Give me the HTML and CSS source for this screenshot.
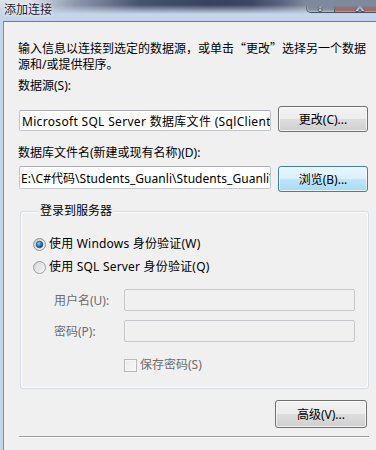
FILE: index.html
```html
<!DOCTYPE html>
<html lang="zh-CN">
<head>
<meta charset="utf-8">
<title>添加连接</title>
<link rel="stylesheet" href="styles.css">
</head>
<body>
<div class="window">
  <div class="titlebar">
    <div class="glass-band"></div>
    <div class="titlebar-row">
      <span class="title">添加连接</span>
      <div class="caption-buttons">
        <span class="cap-btn help">?</span>
        <span class="cap-btn close">X</span>
      </div>
    </div>
  </div>
  <div class="client">
    <p class="intro">输入信息以连接到选定的数据源，或单击<span class="cjk">“</span>更改<span class="cjk">”</span>选择另一个数据源和/或提供程序。</p>
    <div class="label">数据源(S):</div>
    <div class="row row-source">
      <div class="field field-source">Microsoft SQL Server 数据库文件 (SqlClient)</div>
      <button class="btn">更改(C)...</button>
    </div>
    <div class="label label-file">数据库文件名(新建或现有名称)(D):</div>
    <div class="row row-file">
      <div class="field field-file">E:\C#代码\Students_Guanli\Students_Guanli\App_Data\Students.mdf</div>
      <button class="btn btn-default">浏览(B)...</button>
    </div>
    <fieldset class="group">
      <legend class="group-title">登录到服务器</legend>
      <label class="radio-row">
        <svg class="radio" width="13" height="13" viewBox="0 0 13 13">
          <defs>
            <linearGradient id="rg1" x1="0" y1="0" x2="1" y2="1">
              <stop offset="0" stop-color="#c8c8c8"/>
              <stop offset="1" stop-color="#f6f6f6"/>
            </linearGradient>
            <radialGradient id="dot" cx="0.4" cy="0.35" r="0.7">
              <stop offset="0" stop-color="#9fd3f6"/>
              <stop offset="0.45" stop-color="#3a86c6"/>
              <stop offset="1" stop-color="#10365e"/>
            </radialGradient>
          </defs>
          <circle cx="6.5" cy="6.5" r="6" fill="url(#rg1)" stroke="#8d9197"/>
          <circle cx="6.5" cy="6.5" r="3.3" fill="url(#dot)" stroke="#1b3e66" stroke-width="0.6"/>
        </svg>
        <span>使用 Windows 身份验证(W)</span>
      </label>
      <label class="radio-row">
        <svg class="radio" width="13" height="13" viewBox="0 0 13 13">
          <defs>
            <linearGradient id="rg2" x1="0" y1="0" x2="1" y2="1">
              <stop offset="0" stop-color="#cfcfcf"/>
              <stop offset="1" stop-color="#fafafa"/>
            </linearGradient>
          </defs>
          <circle cx="6.5" cy="6.5" r="6" fill="url(#rg2)" stroke="#9a9ea3"/>
          <circle cx="6.5" cy="6.5" r="3.5" fill="#e6e6e6"/>
        </svg>
        <span>使用 SQL Server 身份验证(Q)</span>
      </label>
      <div class="cred-row cred-user">
        <span class="cred-label">用户名(U):</span>
        <div class="field field-disabled"></div>
      </div>
      <div class="cred-row cred-pass">
        <span class="cred-label">密码(P):</span>
        <div class="field field-disabled"></div>
      </div>
      <label class="check-row">
        <span class="checkbox"></span>
        <span>保存密码(S)</span>
      </label>
    </fieldset>
    <div class="adv-row">
      <button class="btn btn-adv">高级(V)...</button>
    </div>
    <div class="separator"></div>
    <div class="footer">
      <button class="btn btn-test">测试连接(T)</button>
      <button class="btn btn-default btn-ok">确定</button>
      <button class="btn btn-cancel">取消</button>
    </div>
  </div>
</div>
</body>
</html>
```

FILE: styles.css
```css
* {
  box-sizing: border-box;
}

html, body {
  margin: 0;
  padding: 0;
}

body {
  width: 376px;
  height: 450px;
  overflow: hidden;
  font-family: "Noto Sans", "Open Sans", "Noto Sans CJK SC", sans-serif;
  font-size: 12px;
  color: #000;
  background: #c4d5eb;
}

.cjk {
  font-family: "Noto Sans CJK SC", sans-serif;
}

.window {
  width: 376px;
  height: 450px;
  display: flex;
  flex-direction: column;
  overflow: hidden;
}

.titlebar {
  height: 21px;
  flex: none;
  display: grid;
  grid-template: 21px / 376px;
  background: linear-gradient(180deg, #dde3ea 0px, #ccd7e6 10px, #c4d5ec 15px, #c2d3eb 21px);
}

.glass-band,
.titlebar-row {
  grid-area: 1 / 1;
}

.glass-band {
  height: 21px;
  background: linear-gradient(90deg, rgba(60, 72, 100, 0) 30px, rgba(80, 94, 122, 0.55) 75px, #46536f 140px, #36425f 210px, #3a4663 250px, #5a6680 282px, #7f899c 306px);
  -webkit-mask-image: linear-gradient(180deg, #000 0px, #000 5px, rgba(0, 0, 0, 0.45) 10px, rgba(0, 0, 0, 0) 14px);
  mask-image: linear-gradient(180deg, #000 0px, #000 5px, rgba(0, 0, 0, 0.45) 10px, rgba(0, 0, 0, 0) 14px);
}

.titlebar-row {
  display: flex;
  align-items: flex-start;
}

.title {
  margin: 2px 0 0 4px;
  line-height: 14px;
  font-family: "Noto Sans CJK SC", sans-serif;
  font-size: 12px;
  color: #1c2030;
  text-shadow: 0 0 6px rgba(255, 255, 255, 0.9), 0 0 3px rgba(255, 255, 255, 0.9);
}

.caption-buttons {
  margin-left: auto;
  display: flex;
  height: 13px;
  margin-right: -10px;
}

.cap-btn {
  display: flex;
  justify-content: center;
  align-items: flex-end;
  height: 13px;
  overflow: hidden;
  color: #fff;
  font-family: "DejaVu Sans", sans-serif;
  font-weight: bold;
  font-size: 12px;
  line-height: 10px;
  text-shadow: 0 0 1px #222, 1px 0 1px #333, -1px 0 1px #333, 0 1px 1px #333;
  border: 1px solid #3d4656;
  border-top: none;
}

.help {
  width: 29px;
  border-radius: 0 0 0 5px;
  background: linear-gradient(180deg, #a9b1bd 0%, #939dab 50%, #7e8a9b 55%, #a4afbe 100%);
  box-shadow: inset 1px 0 0 rgba(255, 255, 255, 0.45), inset 0 -1px 0 rgba(255, 255, 255, 0.35);
}

.close {
  width: 51px;
  border-left: none;
  background: linear-gradient(180deg, #d98c76 0%, #c96a52 45%, #b4432b 55%, #c85c40 100%);
  box-shadow: inset 0 -1px 0 rgba(255, 200, 180, 0.5);
}

.client {
  flex: 1;
  margin-left: 3px;
  border-left: 1px solid #7f8b99;
  border-top: 1px solid #6f7b8a;
  background: #f0f0f0;
  padding: 18px 8px 0 15px;
  display: flex;
  flex-direction: column;
}

.intro {
  margin: 0 0 0 -1px;
  line-height: 16px;
  width: 352px;
}

.label {
  margin-top: 5px;
  line-height: 16px;
  margin-left: -1px;
}

.label-file {
  margin-top: 13px;
}

.row {
  display: flex;
  align-items: flex-start;
  gap: 7px;
}

.row-source {
  margin-top: 12px;
}

.row-file {
  margin-top: 5px;
}

.field {
  background: #fff;
  border: 1px solid #c4c7cc;
  border-top-color: #abadb3;
  border-radius: 2px;
  white-space: nowrap;
  overflow: hidden;
  padding: 0 2px;
  display: flex;
  align-items: center;
}

.field-source {
  width: 252px;
  height: 21px;
  margin-top: 4px;
  letter-spacing: 0.32px;
}

.field-file {
  width: 252px;
  height: 23px;
  padding-left: 1px;
  letter-spacing: 0.05px;
}

.btn {
  font-family: inherit;
  font-size: 12px;
  color: #000;
  width: 90px;
  height: 26px;
  padding: 0;
  border: 1px solid #707070;
  border-radius: 3px;
  background: linear-gradient(180deg, #f3f3f3 0%, #ececec 48%, #dddddd 52%, #cfcfcf 100%);
  box-shadow: inset 0 0 0 1px rgba(255, 255, 255, 0.75);
}

.btn-default {
  border-color: #3c7fb1;
  background: linear-gradient(180deg, #eaf6fd 0%, #d9f0fc 48%, #bee6fd 52%, #a7d9f5 100%);
  box-shadow: inset 0 0 0 1px rgba(255, 255, 255, 0.7);
}

.group {
  margin: 11px 0 0 1px;
  padding: 17px 12px 15px 12px;
  width: 349px;
  border: 1px solid #d5dfe5;
  border-radius: 3px;
  box-shadow: inset 0 0 0 1px #fafbfc;
  display: flex;
  flex-direction: column;
  min-width: 0;
}

.group-title {
  padding: 0 1px;
  margin-left: 6px;
  line-height: 16px;
  background: #f0f0f0;
}

.radio-row {
  display: flex;
  align-items: center;
  gap: 3px;
  line-height: 16px;
  letter-spacing: 0.2px;
}

.radio-row + .radio-row {
  margin-top: 7px;
}

.radio {
  flex: none;
}

.cred-row {
  display: flex;
  align-items: center;
  padding-left: 21px;
  color: #6d6d6d;
}

.cred-user {
  margin-top: 14px;
}

.cred-pass {
  margin-top: 9px;
}

.cred-label {
  width: 70px;
  flex: none;
}

.field-disabled {
  width: 231px;
  height: 22px;
  background: #f0f0f0;
  border: 1px solid #c6c8cc;
  border-radius: 2px;
}

.check-row {
  display: flex;
  align-items: center;
  gap: 3px;
  margin-top: 15px;
  padding-left: 91px;
  line-height: 16px;
  color: #6d6d6d;
}

.checkbox {
  width: 13px;
  height: 13px;
  border: 1px solid #b8b8b8;
  background: linear-gradient(135deg, #ececec, #f8f8f8);
  box-shadow: inset 0 0 0 1px #f6f6f6;
  flex: none;
}

.adv-row {
  display: flex;
  justify-content: flex-end;
  margin-top: 11px;
  padding-right: 1px;
}

.btn-adv {
  width: 92px;
  height: 28px;
}

.separator {
  margin-top: 8px;
  width: 350px;
  height: 2px;
  border-top: 1px solid #a0a0a0;
  border-bottom: 1px solid #ffffff;
}

.footer {
  display: flex;
  margin-top: 13px;
  padding-left: 2px;
}

.btn-test {
  width: 114px;
}

.btn-ok {
  width: 84px;
  margin-left: 54px;
}

.btn-cancel {
  width: 84px;
  margin-left: 10px;
}
```
